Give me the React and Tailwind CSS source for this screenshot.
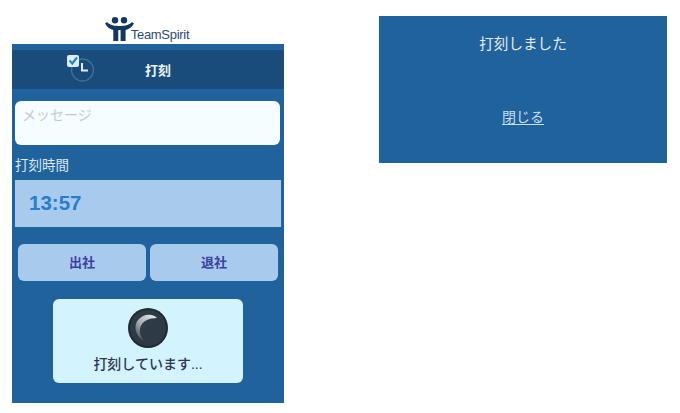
import React from "react";

function Logo() {
  return (
    <div className="h-[44px] flex items-end justify-center">
      <div className="flex items-end mb-[3px] ml-[-2px]">
        <svg width="29" height="24" viewBox="0 0 29 24">
          <circle cx="10" cy="3.2" r="3.2" fill="#12385f" />
          <circle cx="19" cy="3.2" r="3.2" fill="#12385f" />
          <path d="M0 6.5 L2 5 C5 8.5 10 9 14.5 9 C19 9 24 8.5 27 5 L29 6.5 C27 10 23.5 12.5 20.6 13 L20.6 24 L15.6 24 L15.6 13 L13.3 13 L13.3 24 L8.3 24 L8.3 13 C5.5 12.5 2 10 0 6.5 Z" fill="#12385f" />
        </svg>
        <span className="ml-[-3px] text-[13px] leading-none text-[#2c4a6e] tracking-[-0.3px] font-['Liberation_Sans',sans-serif]">TeamSpirit</span>
      </div>
    </div>
  );
}

function ClockIcon() {
  return (
    <svg width="30" height="30" viewBox="0 0 30 30">
      <circle cx="16.5" cy="16" r="11" fill="#1a4a78" stroke="#3f7098" strokeWidth="1.3" />
      <path d="M16 9 V16.5 H22" fill="none" stroke="#dfe9f2" strokeWidth="2" />
      <rect x="1" y="1" width="12" height="12" rx="2" fill="#dcebf5" />
      <path d="M3.5 6.5 L6.3 9.5 L11 3.5" fill="none" stroke="#2a86b8" strokeWidth="2.2" />
    </svg>
  );
}

function Spinner() {
  return (
    <svg width="40" height="40" viewBox="0 0 40 40">
      <defs>
        <linearGradient id="arc" x1="0.9" y1="0" x2="0.2" y2="1">
          <stop offset="0" stopColor="#e8ecef" />
          <stop offset="0.55" stopColor="#a2aab0" />
          <stop offset="1" stopColor="#46525c" />
        </linearGradient>
      </defs>
      <circle cx="20" cy="20" r="20" fill="#1f2a33" />
      <circle cx="20" cy="20" r="18" fill="#2e3a45" />
      <path d="M29 10 C24 5 15 6 10 12 C6 17 6 27 16 33 C12 28 11 24 12.5 19 C14.5 13 21 10 29 10 Z" fill="url(#arc)" />
    </svg>
  );
}

export default function App() {
  return (
    <div className="w-[680px] h-[413px] bg-white flex items-start overflow-hidden font-['Liberation_Sans','Noto_Sans_CJK_JP',sans-serif]">
      <div className="w-[272px] ml-[12px] shrink-0">
        <Logo />
        <div className="bg-[#20629c] h-[359px] flex flex-col">
          <div className="mt-[6px] h-[39px] bg-[#194b7b] relative flex items-center justify-center">
            <div className="absolute left-[54px] top-[4px]"><ClockIcon /></div>
            <span className="text-[13px] font-bold text-[#eef4f8] ml-[20px] relative top-[1px]">打刻</span>
          </div>
          <div className="mt-[12px] ml-[3px] mr-[4px] h-[44px] bg-[#f5fdfe] rounded-[6px] px-[7px] pt-[5px] text-[14px] leading-[18px] text-[#c4cbd0]">メッセージ</div>
          <div className="mt-[12px] ml-[3px] text-[13.5px] leading-[18px] text-[#dbe8f2]">打刻時間</div>
          <div className="mt-[5px] mx-[3px] h-[47px] bg-[#a8caec] flex items-center pl-[14px] text-[20.5px] font-bold text-[#2a7ccc]">13:57</div>
          <div className="mt-[17px] mx-[6px] grid grid-cols-2 gap-[4px]">
            <div className="h-[37px] rounded-[6px] bg-[#a8caec] flex items-center justify-center text-[13px] font-bold text-[#3a3fa0]">出社</div>
            <div className="h-[37px] rounded-[6px] bg-[#a8caec] flex items-center justify-center text-[13px] font-bold text-[#3a3fa0]">退社</div>
          </div>
          <div className="mt-[18px] mx-auto w-[190px] h-[84px] rounded-[6px] bg-[#d3f3fe] flex flex-col items-center pt-[9px]">
            <Spinner />
            <div className="mt-[7px] text-[14px] leading-[18px] font-medium text-[#2f3650]">打刻しています...</div>
          </div>
        </div>
      </div>
      <div className="ml-[95px] mt-[16px] w-[288px] h-[147px] bg-[#20629c] flex flex-col items-center shrink-0">
        <div className="mt-[19px] text-[14.6px] leading-[18px] text-[#e6edf2]">打刻しました</div>
        <div className="mt-[54px] text-[14px] leading-[20px] text-[#c6dff2] underline underline-offset-2">閉じる</div>
      </div>
    </div>
  );
}
